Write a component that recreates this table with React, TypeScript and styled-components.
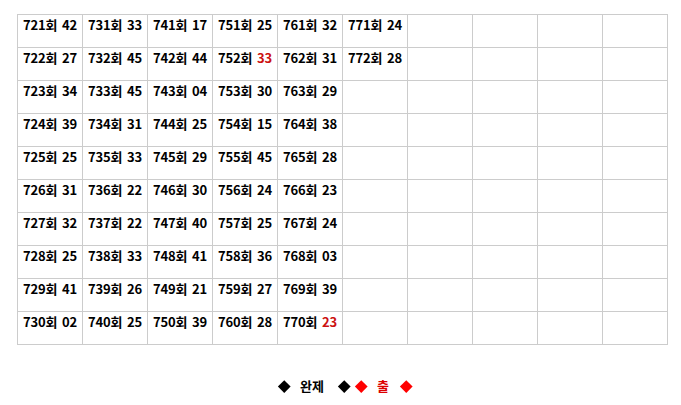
import styled, { createGlobalStyle } from 'styled-components'

const GlobalStyle = createGlobalStyle`
    html, body {
        margin: 0;
        padding: 0;
        background: #fff;
    }

    body {
        font-family: "Noto Sans CJK KR", "Liberation Sans", sans-serif;
        color: #000;
    }
`

// [회차, 번호, 출 여부]
const columns: [number, string, boolean?][][] = [
    [[721, '42'], [722, '27'], [723, '34'], [724, '39'], [725, '25'], [726, '31'], [727, '32'], [728, '25'], [729, '41'], [730, '02']],
    [[731, '33'], [732, '45'], [733, '45'], [734, '31'], [735, '33'], [736, '22'], [737, '22'], [738, '33'], [739, '26'], [740, '25']],
    [[741, '17'], [742, '44'], [743, '04'], [744, '25'], [745, '29'], [746, '30'], [747, '40'], [748, '41'], [749, '21'], [750, '39']],
    [[751, '25'], [752, '33', true], [753, '30'], [754, '15'], [755, '45'], [756, '24'], [757, '25'], [758, '36'], [759, '27'], [760, '28']],
    [[761, '32'], [762, '31'], [763, '29'], [764, '38'], [765, '28'], [766, '23'], [767, '24'], [768, '03'], [769, '39'], [770, '23', true]],
    [[771, '24'], [772, '28']],
]

const COLS = 10
const ROWS = 10

const App = () => {
    const cells = []
    for (let r = 0; r < ROWS; r++) {
        for (let c = 0; c < COLS; c++) {
            const item = columns[c] && columns[c][r]
            cells.push(
                <Cell key={`${r}-${c}`}>
                    {item && (
                        <>
                            {item[0]}회 <Num $hit={!!item[2]}>{item[1]}</Num>
                        </>
                    )}
                </Cell>
            )
        }
    }

    return (
        <Page>
            <GlobalStyle />
            <Board>{cells}</Board>
            <Legend>
                <Mark $color="#000" />
                <Label>완제</Label>
                <Mark $color="#000" $gap={5} />
                <Mark $color="#f00" />
                <Label $color="#d00" $right={11}>출</Label>
                <Mark $color="#f00" />
            </Legend>
        </Page>
    )
}

export default App

const Page = styled.div`
    width: 681px;
    padding: 14px 0 0 17px;
    box-sizing: border-box;
`

const Board = styled.div`
    display: grid;
    grid-template-columns: repeat(10, 64px);
    grid-auto-rows: 32px;
    gap: 1px;
    padding: 1px;
    width: 651px;
    box-sizing: border-box;
    background: #cccccc;
`

const Cell = styled.div`
    background: #fff;
    padding: 2px 0 0 5px;
    font-size: 13px;
    font-weight: 700;
    line-height: 16px;
    white-space: nowrap;
    letter-spacing: -0.2px;
    word-spacing: 2px;
`

const Num = styled.span<{ $hit?: boolean }>`
    color: ${(p) => (p.$hit ? '#cc1111' : '#000')};
`

const Legend = styled.div`
    display: flex;
    align-items: center;
    justify-content: center;
    margin: 32px 0 0 -17px;
    width: 681px;
    padding-left: 9px;
    box-sizing: border-box;
    height: 18px;
`

const Mark = styled.span<{ $color: string; $gap?: number }>`
    position: relative;
    display: inline-block;
    width: 12px;
    height: 12px;
    margin-right: ${(p) => p.$gap || 0}px;

    &::before {
        content: '';
        position: absolute;
        left: 1.75px;
        top: 1.75px;
        width: 8.5px;
        height: 8.5px;
        background: ${(p) => p.$color};
        transform: rotate(45deg);
    }
`

const Label = styled.span<{ $color?: string; $right?: number }>`
    font-size: 13px;
    font-weight: 700;
    line-height: 16px;
    margin: 0 ${(p) => p.$right || 14}px 0 10px;
    color: ${(p) => p.$color || '#000'};
`
